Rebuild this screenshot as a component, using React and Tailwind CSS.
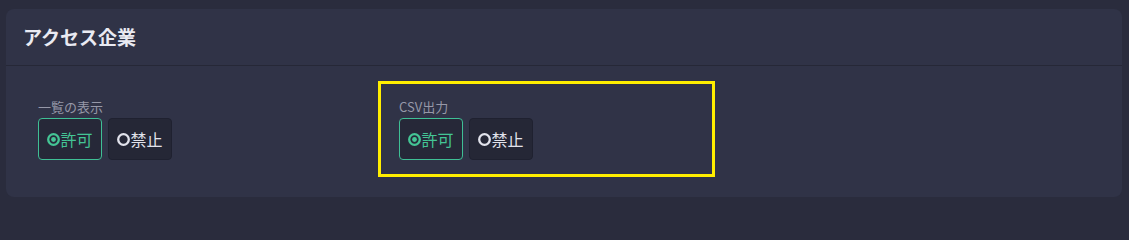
import React from "react"

const font = { fontFamily: '"Noto Sans CJK JP", "Noto Sans", sans-serif' }

const Radio = ({ checked }) => (
  <svg width="13" height="13" viewBox="0 0 13 13" className="shrink-0">
    <circle cx="6.5" cy="6.5" r="5.3" fill="none" stroke="currentColor" strokeWidth="2.3" />
    {checked && <circle cx="6.5" cy="6.5" r="2.4" fill="currentColor" />}
  </svg>
)

const Choice = ({ label, checked }) => (
  <button
    className={
      checked
        ? "w-[64px] h-[42px] flex items-center justify-center rounded-[4px] border border-[#3fbf95] bg-[#262838] text-[#44c595] text-[16px]"
        : "w-[64px] h-[42px] flex items-center justify-center rounded-[4px] border border-[#1f2130] bg-[#252736] text-[#e2e3ec] text-[16px]"
    }
  >
    <Radio checked={checked} />
    <span className="leading-none">{label}</span>
  </button>
)

const Group = ({ title, highlight }) => (
  <div
    className={
      highlight
        ? "w-[337px] border-[3px] border-[#ffee00] px-[18px] pt-[14px] pb-[14px]"
        : "w-[337px] border-[3px] border-transparent px-[18px] pt-[14px] pb-[14px]"
    }
  >
    <div className="text-[13px] leading-[18px] text-[#9698a8]">{title}</div>
    <div className="flex gap-[6px] mt-[2px]">
      <Choice label="許可" checked />
      <Choice label="禁止" />
    </div>
  </div>
)

export default function App() {
  return (
    <div className="min-h-screen bg-[#2a2c3d] pl-[6px] pr-[7px] pt-[9px] pb-[6px]" style={font}>
      <div className="rounded-lg bg-[#303347]">
        {/* Header */}
        <div className="h-[57px] px-[17px] flex items-center border-b border-[#262837]">
          <h2 className="text-[19px] font-bold text-[#e9eaf2]">アクセス企業</h2>
        </div>

        {/* Body */}
        <div className="flex gap-[24px] px-[11px] pt-[15px] pb-[20px]">
          <Group title="一覧の表示" />
          <Group title="CSV出力" highlight />
        </div>
      </div>
    </div>
  )
}
